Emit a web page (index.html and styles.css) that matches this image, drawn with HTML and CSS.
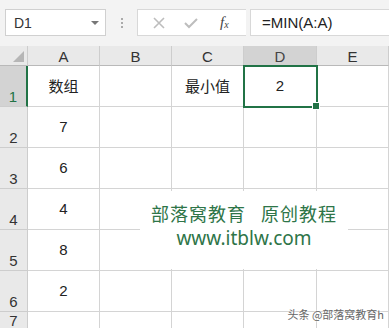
FILE: index.html
```html
<!DOCTYPE html>
<html lang="zh-CN">
<head>
    <meta charset="UTF-8">
    <title>MIN函数</title>
    <link rel="stylesheet" href="styles.css">
</head>
<body>
    <div class="toolbar">
        <div class="name-box">
            <span>D1</span>
            <span class="caret"></span>
        </div>
        <div class="dots"><i></i><i></i><i></i></div>
        <div class="fx-box">
            <svg class="ico" width="14" height="14" viewBox="0 0 14 14"><path d="M2 2L12 12M12 2L2 12" stroke="#bdbdbd" stroke-width="1.6" fill="none"/></svg>
            <svg class="ico" width="16" height="14" viewBox="0 0 16 14"><path d="M2 7L6 11L14 3" stroke="#bdbdbd" stroke-width="2" fill="none"/></svg>
            <span class="fx">f<sub>x</sub></span>
        </div>
        <div class="formula">=MIN(A:A)</div>
    </div>

    <div class="sheet">
        <div class="hd corner"><span class="tri"></span></div>
        <div class="hd col">A</div>
        <div class="hd col">B</div>
        <div class="hd col">C</div>
        <div class="hd col sel">D</div>
        <div class="hd col">E</div>

        <div class="hd row sel">1</div>
        <div class="cell">数组</div>
        <div class="cell"></div>
        <div class="cell">最小值</div>
        <div class="cell">2</div>
        <div class="cell"></div>

        <div class="hd row">2</div>
        <div class="cell">7</div>
        <div class="cell"></div><div class="cell"></div><div class="cell"></div><div class="cell"></div>

        <div class="hd row">3</div>
        <div class="cell">6</div>
        <div class="cell"></div><div class="cell"></div><div class="cell"></div><div class="cell"></div>

        <div class="hd row">4</div>
        <div class="cell">4</div>
        <div class="cell"></div><div class="cell"></div><div class="cell"></div><div class="cell"></div>

        <div class="hd row">5</div>
        <div class="cell">8</div>
        <div class="cell"></div><div class="cell"></div><div class="cell"></div><div class="cell"></div>

        <div class="hd row">6</div>
        <div class="cell">2</div>
        <div class="cell"></div><div class="cell"></div><div class="cell"></div><div class="cell"></div>

        <div class="hd row short">7</div>
        <div class="cell"></div><div class="cell"></div><div class="cell"></div><div class="cell"></div><div class="cell"></div>

        <div class="selection"><span class="handle"></span></div>
        <div class="banner">
            <div class="b1">部落窝教育&nbsp;&nbsp;&nbsp;原创教程</div>
            <div class="b2">www.itblw.com</div>
        </div>
        <div class="mark">头条 @部落窝教育h</div>
    </div>
</body>
</html>
```

FILE: styles.css
```css
body {
    margin: 0;
    width: 389px;
    height: 328px;
    overflow: hidden;
    background: #fff;
    font-family: 'Liberation Sans', 'Noto Sans CJK SC', sans-serif;
    color: #222;
}
.toolbar {
    height: 46px;
    background: #f3f3f3;
    display: flex;
    align-items: flex-start;
    padding-top: 9px;
    box-sizing: border-box;
}
.name-box {
    margin-left: 5px;
    width: 101px;
    height: 27px;
    box-sizing: border-box;
    background: #fff;
    border: 1px solid #d0d0d0;
    display: flex;
    align-items: center;
    justify-content: space-between;
    padding: 0 6px 0 8px;
    font-size: 14px;
    color: #333;
}
.caret {
    width: 0;
    height: 0;
    border-left: 4px solid transparent;
    border-right: 4px solid transparent;
    border-top: 4px solid #777;
}
.dots {
    width: 31px;
    height: 27px;
    display: flex;
    flex-direction: column;
    align-items: center;
    justify-content: center;
    gap: 2px;
}
.dots i {
    width: 2px;
    height: 2px;
    background: #aaa;
}
.fx-box {
    width: 109px;
    height: 27px;
    box-sizing: border-box;
    background: #fff;
    border: 1px solid #d8d8d8;
    border-right: none;
    display: flex;
    align-items: center;
    padding-left: 14px;
    gap: 17px;
}
.fx {
    font-family: 'Liberation Serif', serif;
    font-style: italic;
    font-size: 15px;
    color: #444;
    margin-left: 4px;
}
.fx sub {
    font-size: 10px;
    vertical-align: -1px;
}
.formula {
    flex: 1;
    height: 27px;
    box-sizing: border-box;
    background: #fff;
    border: 1px solid #d8d8d8;
    border-right: none;
    margin-left: 4px;
    padding-left: 11px;
    font-size: 15px;
    line-height: 25px;
    color: #222;
}
.sheet {
    position: relative;
    display: grid;
    grid-template-columns: 28px 72px 72px 72px 73px 72px;
    grid-template-rows: 20px repeat(6, 41px) 20px;
}
.hd {
    background: #e9e9e9;
    color: #333;
    font-size: 15px;
    box-sizing: border-box;
    border-right: 1px solid #cdcdcd;
    border-bottom: 1px solid #b9b9b9;
}
.col {
    display: flex;
    justify-content: center;
    align-items: center;
    line-height: 1;
    padding-top: 2px;
}
.row {
    display: flex;
    justify-content: center;
    align-items: flex-end;
    padding-bottom: 1px;
    border-bottom: 1px solid #cdcdcd;
}
.row.short {
    align-items: flex-start;
    padding-top: 0;
}
.hd.sel {
    background: #d3d3d3;
    color: #217346;
}
.col.sel {
    color: #444;
}
.row.sel {
    border-right: 2px solid #217346;
}
.corner {
    position: relative;
    border-right: 1px solid #cdcdcd;
}
.tri {
    position: absolute;
    right: 3px;
    bottom: 3px;
    width: 0;
    height: 0;
    border-left: 11px solid transparent;
    border-bottom: 11px solid #b6b6b6;
}
.cell {
    box-sizing: border-box;
    border-right: 1px solid #d4d4d4;
    border-bottom: 1px solid #d4d4d4;
    display: flex;
    justify-content: center;
    align-items: center;
    font-size: 15px;
    padding-bottom: 2px;
}
.selection {
    position: absolute;
    left: 243px;
    top: 19px;
    width: 75px;
    height: 43px;
    box-sizing: border-box;
    border: 2px solid #217346;
}
.handle {
    position: absolute;
    right: -4px;
    bottom: -4px;
    width: 6px;
    height: 6px;
    background: #217346;
    border: 1px solid #fff;
}
.banner {
    position: absolute;
    left: 140px;
    top: 145px;
    width: 208px;
    height: 78px;
    background: #fff;
    color: #2e7548;
    text-align: center;
    font-family: 'Noto Sans', 'Noto Sans CJK SC', sans-serif;
    padding-top: 10px;
    box-sizing: border-box;
}
.b1 {
    font-family: 'Noto Sans CJK SC', sans-serif;
    font-size: 18px;
    line-height: 24px;
    letter-spacing: 1px;
}
.b2 {
    font-size: 19px;
    line-height: 26px;
}
.mark {
    position: absolute;
    right: 5px;
    top: 260px;
    font-family: 'Noto Sans CJK SC', sans-serif;
    font-size: 11px;
    color: #666;
    text-shadow: 0 0 2px #fff, 0 0 2px #fff;
}
```
